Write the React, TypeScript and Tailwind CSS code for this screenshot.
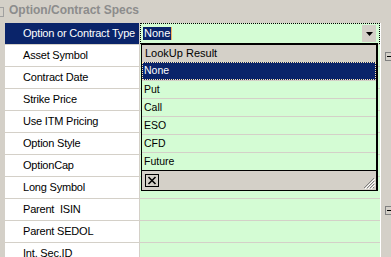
import React from "react";

const rows = [
  "Option or Contract Type",
  "Asset Symbol",
  "Contract Date",
  "Strike Price",
  "Use ITM Pricing",
  "Option Style",
  "OptionCap",
  "Long Symbol",
  "Parent  ISIN",
  "Parent SEDOL",
  "Int. Sec.ID",
];

const boxRows = new Set([1, 8]);

function MinusBox() {
  return (
    <div className="w-[9px] h-[9px] border border-[#808080] flex items-center justify-center">
      <div className="w-[5px] h-px bg-black" />
    </div>
  );
}

export default function App() {
  const items = ["Put", "Call", "ESO", "CFD", "Future"];
  return (
    <div
      className="relative w-[391px] h-[257px] overflow-hidden bg-[#d4d0c8] text-black"
      style={{ fontFamily: '"Liberation Sans", Arial, sans-serif' }}
    >
      {/* header */}
      <div className="h-[23px] flex items-center">
        <div className="-ml-[6px] w-[10px] h-[10px] border border-[#a0a0a0] mt-[1px]" />
        <span className="ml-[5px] text-[12px] font-bold text-[#8c8c8c] leading-none -mt-[3px]">
          Option/Contract Specs
        </span>
      </div>

      {/* rows */}
      {rows.map((label, i) => (
        <div key={i} className="flex h-[22px]">
          <div className="w-[5px] shrink-0" />
          <div
            className={`w-[135px] shrink-0 border-r border-b border-[#d4d0c8] flex items-center pl-[18px] text-[11px] tracking-[-0.2px] whitespace-pre ${
              i === 0 ? "bg-[#0a246a] text-white" : "bg-white"
            }`}
          >
            {label}
          </div>
          <div className="w-[240px] shrink-0 bg-[#d4fcd4] border-b border-[#d4d0c8]">
            {i === 0 && (
              <div className="relative h-full border border-dotted border-black flex items-center pl-[2px]">
                <span className="bg-[#0a246a] text-white text-[11px] leading-[13px] px-px">None</span>
                <span className="w-px h-[13px] bg-[#f0b060]" />
                <div className="absolute right-[3px] top-px w-[14px] h-[17px] bg-[#d4d0c8] flex items-center justify-center">
                  <svg width="7" height="4" viewBox="0 0 7 4">
                    <path d="M0 0H7L3.5 4Z" fill="black" />
                  </svg>
                </div>
              </div>
            )}
          </div>
          <div className="w-[1px] shrink-0 bg-white" />
          <div className="flex-1 flex items-center pl-[4px]">
            {boxRows.has(i) && <MinusBox />}
          </div>
        </div>
      ))}

      {/* dropdown list */}
      <div className="absolute left-[141px] top-[43px] w-[237px] h-[148px] border-t-2 border-l border-r-2 border-b border-black bg-[#d4fcd4] flex flex-col text-[11px]">
        <div className="h-[17px] bg-[#d4d0c8] flex items-center pl-[3px] shrink-0">LookUp Result</div>
        <div className="h-[19px] shrink-0 border-b border-[#d4d0c8]">
          <div className="h-full bg-[#0a246a] text-white border border-dotted border-[#ffe8b0] flex items-center pl-[1px] text-[10.5px]">
            None
          </div>
        </div>
        {items.map((it, idx) => (
          <div
            key={it}
            className={`h-[18px] shrink-0 border-b flex items-center pl-[2px] text-[10.5px] ${
              idx === items.length - 1 ? "border-black" : "border-[#d4d0c8]"
            }`}
          >
            {it}
          </div>
        ))}
        <div className="flex-1 bg-[#d4d0c8] flex items-center justify-between pl-[3px] pr-[1px] relative">
          <div className="w-[14px] h-[13px] border border-black flex items-center justify-center">
            <svg width="10" height="9" viewBox="0 0 10 9">
              <path d="M1.5 1L8.5 8M8.5 1L1.5 8" stroke="black" strokeWidth="1.6" />
            </svg>
          </div>
          <svg width="12" height="12" viewBox="0 0 12 12" className="self-end mb-[1px]">
            <path d="M11 1L1 11M11 4L4 11M11 7L7 11M11 10L10 11" stroke="#808080" strokeWidth="1" />
            <path d="M12 2L2 12M12 5L5 12M12 8L8 12" stroke="#ffffff" strokeWidth="1" />
          </svg>
        </div>
      </div>
    </div>
  );
}
